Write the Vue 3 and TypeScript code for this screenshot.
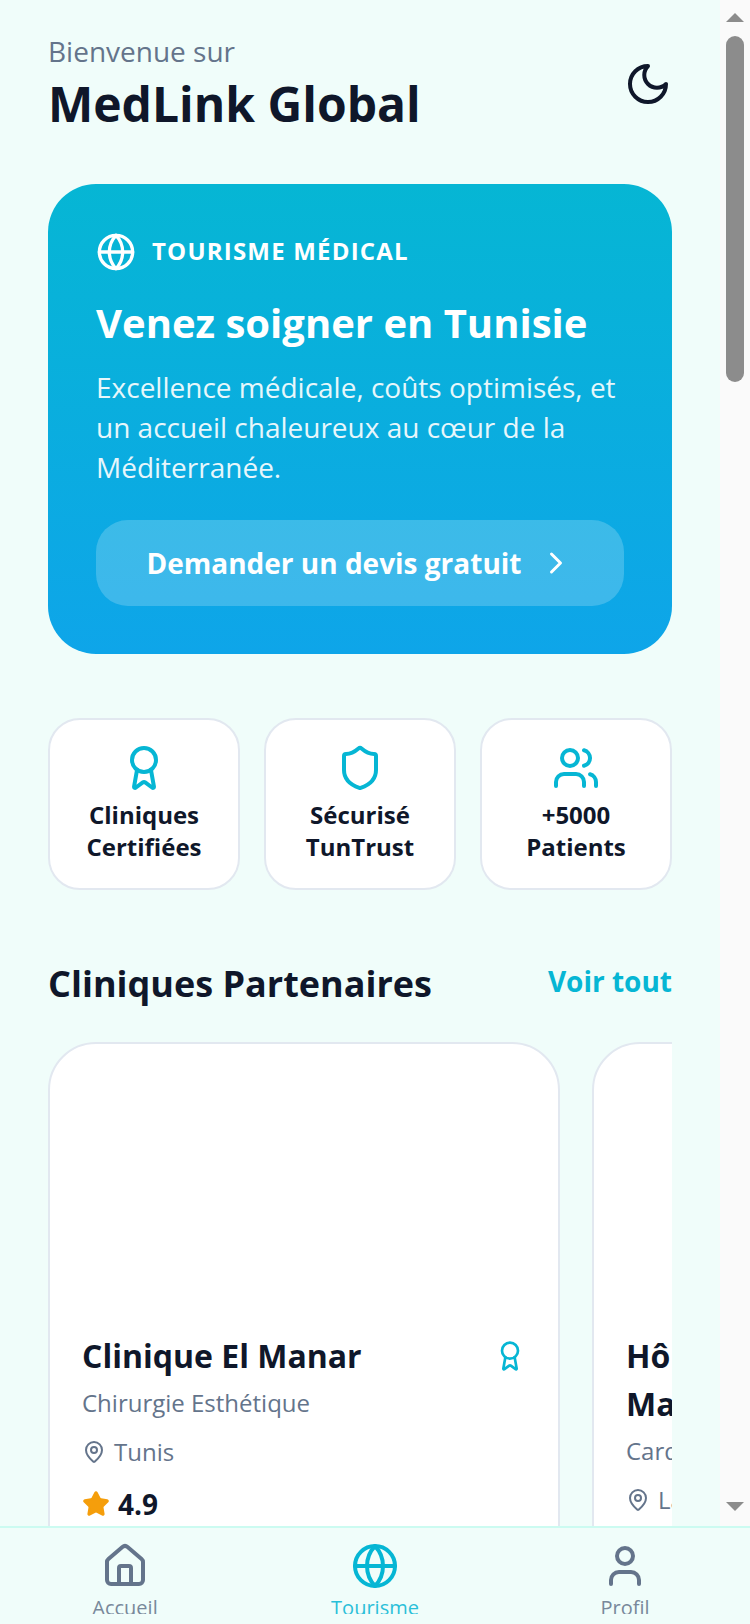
<template>
  <div class="app">
    <div class="top">
      <main class="content">
        <header class="header">
          <div>
            <p class="welcome">Bienvenue sur</p>
            <h1 class="brand">MedLink Global</h1>
          </div>
          <Icon name="moon" :size="48" class="moon" />
        </header>

        <section class="hero">
          <div class="hero-tag">
            <Icon name="globe" :size="40" />
            <span class="hero-tag-text">TOURISME MÉDICAL</span>
          </div>
          <h2 class="hero-title">Venez soigner en Tunisie</h2>
          <p class="hero-text">
            Excellence médicale, coûts optimisés, et un accueil chaleureux au cœur de la Méditerranée.
          </p>
          <button class="hero-btn">
            <span>Demander un devis gratuit</span>
            <Icon name="chevron" :size="36" />
          </button>
        </section>

        <section class="stats">
          <div v-for="stat in stats" :key="stat.line1" class="stat">
            <Icon :name="stat.icon" :size="48" class="accent" />
            <p class="stat-label">{{ stat.line1 }}<br />{{ stat.line2 }}</p>
          </div>
        </section>

        <div class="section-head">
          <h2 class="section-title">Cliniques Partenaires</h2>
          <a class="see-all">Voir tout</a>
        </div>

        <div class="clinics">
          <article v-for="clinic in clinics" :key="clinic.name" class="clinic">
            <div class="clinic-image"></div>
            <div class="clinic-body">
              <div class="clinic-head">
                <h3 class="clinic-name">{{ clinic.name }}</h3>
                <Icon name="award" :size="32" class="accent clinic-badge" />
              </div>
              <p class="clinic-spec">{{ clinic.specialty }}</p>
              <p class="clinic-place">
                <Icon name="pin" :size="24" />
                <span>{{ clinic.city }}</span>
              </p>
              <p class="clinic-rating">
                <svg class="star" viewBox="0 0 24 24" width="28" height="28">
                  <path d="M11.525 2.295a.53.53 0 0 1 .95 0l2.31 4.679a2.123 2.123 0 0 0 1.595 1.16l5.166.756a.53.53 0 0 1 .294.904l-3.736 3.638a2.123 2.123 0 0 0-.611 1.878l.882 5.14a.53.53 0 0 1-.771.56l-4.618-2.428a2.122 2.122 0 0 0-1.973 0L6.396 21.01a.53.53 0 0 1-.77-.56l.881-5.139a2.122 2.122 0 0 0-.611-1.879L2.16 9.795a.53.53 0 0 1 .294-.906l5.165-.755a2.122 2.122 0 0 0 1.597-1.16z" />
                </svg>
                <span>{{ clinic.rating }}</span>
              </p>
            </div>
          </article>
        </div>
      </main>

      <aside class="scrollbar">
        <span class="arrow up"></span>
        <span class="thumb"></span>
        <span class="arrow down"></span>
      </aside>
    </div>

    <nav class="tabs">
      <a v-for="tab in tabs" :key="tab.label" class="tab" :class="{ active: tab.active }">
        <Icon :name="tab.icon" :size="48" class="tab-icon" />
        <span class="tab-label">{{ tab.label }}</span>
      </a>
    </nav>
  </div>
</template>

<script setup lang="ts">
import { h } from 'vue'

const paths: Record<string, string[]> = {
  moon: ['M12 3a6 6 0 0 0 9 9 9 9 0 1 1-9-9Z'],
  globe: [
    'M12 2a10 10 0 1 0 0 20a10 10 0 1 0 0-20',
    'M12 2a14.5 14.5 0 0 0 0 20 14.5 14.5 0 0 0 0-20',
    'M2 12h20'
  ],
  chevron: ['m9 18 6-6-6-6'],
  award: [
    'm15.477 12.89 1.515 8.526a.5.5 0 0 1-.81.47l-3.58-2.687a1 1 0 0 0-1.197 0l-3.586 2.686a.5.5 0 0 1-.81-.469l1.514-8.526',
    'M12 2a6 6 0 1 0 0 12a6 6 0 1 0 0-12'
  ],
  shield: [
    'M20 13c0 5-3.5 7.5-7.66 8.95a1 1 0 0 1-.67-.01C7.5 20.5 4 18 4 13V6a1 1 0 0 1 1-1c2 0 4.5-1.2 6.24-2.72a1.17 1.17 0 0 1 1.52 0C14.51 3.81 17 5 19 5a1 1 0 0 1 1 1z'
  ],
  users: [
    'M16 21v-2a4 4 0 0 0-4-4H6a4 4 0 0 0-4 4v2',
    'M9 3a4 4 0 1 0 0 8a4 4 0 1 0 0-8',
    'M22 21v-2a4 4 0 0 0-3-3.87',
    'M16 3.13a4 4 0 0 1 0 7.75'
  ],
  pin: [
    'M20 10c0 4.993-5.539 10.193-7.399 11.799a1 1 0 0 1-1.202 0C9.539 20.193 4 14.993 4 10a8 8 0 0 1 16 0',
    'M12 7a3 3 0 1 0 0 6a3 3 0 1 0 0-6'
  ],
  house: [
    'M15 21v-8a1 1 0 0 0-1-1h-4a1 1 0 0 0-1 1v8',
    'M3 10a2 2 0 0 1 .709-1.528l7-5.999a2 2 0 0 1 2.582 0l7 5.999A2 2 0 0 1 21 10v9a2 2 0 0 1-2 2H5a2 2 0 0 1-2-2z'
  ],
  user: [
    'M19 21v-2a4 4 0 0 0-4-4H9a4 4 0 0 0-4 4v2',
    'M12 3a4 4 0 1 0 0 8a4 4 0 1 0 0-8'
  ]
}

const Icon = (props: { name: string; size: number }) =>
  h(
    'svg',
    {
      width: props.size,
      height: props.size,
      viewBox: '0 0 24 24',
      fill: 'none',
      stroke: 'currentColor',
      'stroke-width': 2,
      'stroke-linecap': 'round',
      'stroke-linejoin': 'round'
    },
    paths[props.name].map((d) => h('path', { d }))
  )
Icon.props = ['name', 'size']

const stats = [
  { icon: 'award', line1: 'Cliniques', line2: 'Certifiées' },
  { icon: 'shield', line1: 'Sécurisé', line2: 'TunTrust' },
  { icon: 'users', line1: '+5000', line2: 'Patients' }
]

const clinics = [
  { name: 'Clinique El Manar', specialty: 'Chirurgie Esthétique', city: 'Tunis', rating: '4.9' },
  { name: 'Hôpital International Marsa', specialty: 'Cardiologie', city: 'La Marsa', rating: '4.8' }
]

const tabs = [
  { icon: 'house', label: 'Accueil', active: false },
  { icon: 'globe', label: 'Tourisme', active: true },
  { icon: 'user', label: 'Profil', active: false }
]
</script>

<style>
html,
body {
  margin: 0;
  overflow: hidden;
}
</style>

<style scoped>
.app {
  width: 750px;
  height: 1624px;
  display: flex;
  flex-direction: column;
  overflow: hidden;
  background: #f0fdfa;
  font-family: "Open Sans", sans-serif;
  color: #0f172a;
}

.top {
  flex: 1;
  min-height: 0;
  display: flex;
}

.content {
  width: 720px;
  box-sizing: border-box;
  padding: 32px 48px 0;
  overflow: hidden;
}

.scrollbar {
  width: 30px;
  background: #fafafa;
  display: flex;
  flex-direction: column;
  align-items: center;
  padding: 13px 0 15px;
  box-sizing: border-box;
}

.arrow {
  width: 0;
  height: 0;
  border-left: 9px solid transparent;
  border-right: 9px solid transparent;
}

.arrow.up {
  border-bottom: 9px solid #8c8c8c;
}

.arrow.down {
  border-top: 9px solid #8c8c8c;
  margin-top: auto;
}

.thumb {
  width: 18px;
  height: 346px;
  margin-top: 14px;
  border-radius: 9px;
  background: #8c8c8c;
}

.header {
  display: flex;
  justify-content: space-between;
  align-items: center;
  margin-bottom: 48px;
}

.welcome {
  margin: 0;
  font-size: 28px;
  line-height: 38px;
  padding-bottom: 2px;
  color: #64748b;
}

.brand {
  margin: 0;
  font-size: 48px;
  line-height: 64px;
  font-weight: 700;
}

.moon {
  display: block;
}

.hero {
  padding: 48px;
  border-radius: 48px;
  color: #fff;
  background: linear-gradient(180deg, #06b6d4, #0ea5e9);
}

.hero-tag {
  display: flex;
  align-items: center;
  gap: 16px;
  margin-bottom: 24px;
  font-size: 24px;
  line-height: 36px;
  font-weight: 700;
  letter-spacing: 1.2px;
}

.hero-tag-text {
  margin-top: -2px;
}

.hero-title {
  margin: 0 0 17px;
  font-size: 40px;
  line-height: 54px;
  font-weight: 700;
}

.hero-text {
  margin: 0 0 33px;
  font-size: 28px;
  line-height: 40px;
  opacity: 0.9;
}

.hero-btn {
  width: 100%;
  display: flex;
  align-items: center;
  justify-content: center;
  gap: 16px;
  padding: 24px;
  border: none;
  border-radius: 32px;
  background: rgba(255, 255, 255, 0.2);
  color: #fff;
  font: 700 28px/38px "Open Sans", sans-serif;
}

.stats {
  display: grid;
  grid-template-columns: repeat(3, 1fr);
  gap: 24px;
  margin-top: 64px;
}

.stat {
  display: flex;
  flex-direction: column;
  align-items: center;
  gap: 7px;
  padding: 24px 8px 25px;
  border: 2px solid #e2e8f0;
  border-radius: 32px;
  background: #fff;
}

.accent {
  color: #06b6d4;
}

.stat-label {
  margin: 0;
  font-size: 24px;
  line-height: 32px;
  font-weight: 700;
  text-align: center;
}

.section-head {
  display: flex;
  justify-content: space-between;
  align-items: flex-start;
  margin: 64px 0 30px;
}

.section-title {
  margin: 0;
  padding-top: 2px;
  font-size: 36px;
  line-height: 56px;
  font-weight: 700;
}

.see-all {
  font-size: 28px;
  line-height: 54px;
  font-weight: 700;
  color: #06b6d4;
}

.clinics {
  display: flex;
  gap: 32px;
  overflow: hidden;
}

.clinic {
  flex: none;
  width: 512px;
  box-sizing: border-box;
  border: 2px solid #e2e8f0;
  border-radius: 48px;
  background: #fff;
}

.clinic-image {
  height: 256px;
}

.clinic-body {
  padding: 32px;
}

.clinic-head {
  display: flex;
  justify-content: space-between;
  align-items: flex-start;
  gap: 32px;
}

.clinic-name {
  margin: 0;
  font-size: 32px;
  line-height: 48px;
  font-weight: 700;
}

.clinic-badge {
  flex: none;
  margin-top: 8px;
}

.clinic-spec {
  margin: 5px 0 0;
  font-size: 24px;
  line-height: 36px;
  color: #64748b;
}

.clinic-place {
  display: flex;
  align-items: center;
  gap: 8px;
  margin: 13px 0 0;
  font-size: 24px;
  line-height: 36px;
  color: #64748b;
}

.clinic-rating {
  display: flex;
  align-items: center;
  gap: 8px;
  margin: 16px 0 0;
  font-size: 28px;
  line-height: 36px;
  font-weight: 700;
}

.star {
  fill: #f59e0b;
  stroke: #f59e0b;
  stroke-width: 2;
  stroke-linejoin: round;
}

.tabs {
  flex: none;
  height: 98px;
  box-sizing: border-box;
  display: flex;
  padding-top: 14px;
  border-top: 2px solid #ccfbf1;
  background: #f0fdfa;
}

.tab {
  flex: 1;
  height: 72px;
  overflow: hidden;
  display: flex;
  flex-direction: column;
  align-items: center;
  gap: 4px;
  font-size: 20px;
  line-height: 28px;
  color: #64748b;
}

.tab-icon {
  flex: none;
}

.tab-label {
  opacity: 0.85;
}

.tab.active {
  color: #06b6d4;
}
</style>
